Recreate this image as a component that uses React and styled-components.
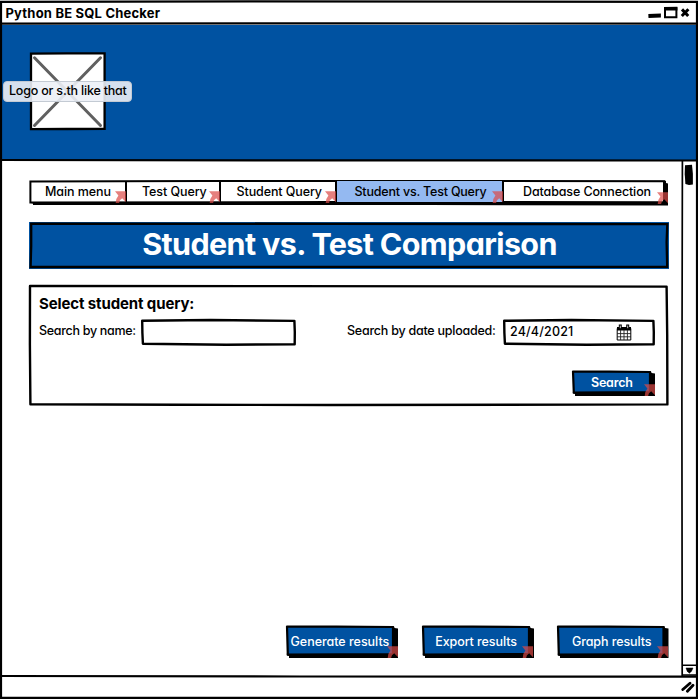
import React from "react";
import styled, { createGlobalStyle } from "styled-components";

const blue = "#0052a1";

const GlobalStyle = createGlobalStyle`
  * { box-sizing: border-box; }
  body {
    margin: 0;
    background: #fff;
    color: #000;
    font-family: Inter, "Liberation Sans", sans-serif;
    font-feature-settings: "cv11";
    font-size: 12.5px;
  }
`;

const Window = styled.div`
  position: relative;
  display: flex;
  flex-direction: column;
  width: 698px;
  height: 699px;
  padding: 3px 2px 2px;
`;

const Text = styled.span`
  white-space: nowrap;
  line-height: 16px;
  font-size: ${(p) => p.$size || 12.5}px;
  font-weight: ${(p) => p.$weight || 450};
  letter-spacing: ${(p) => p.$track || 0}px;
`;

const TitleBar = styled.header`
  display: flex;
  justify-content: space-between;
  height: 22px;
  padding: 2px 4px 0 3.5px;
`;

const WindowControls = styled.svg`
  width: 44px;
  height: 18px;
  margin-top: -1px;
`;

const Banner = styled.div`
  height: 136px;
  padding: 27px 0 0 27px;
  background: ${blue};
`;

const LogoBox = styled.div`
  position: relative;
  width: 77px;
  height: 79px;
`;

const LogoCaption = styled.div`
  position: absolute;
  left: -26px;
  top: 29px;
  width: 129px;
  height: 21px;
  padding: 1px 0 0 5px;
  border: 1px solid #c3cad3;
  border-radius: 4px;
  background: rgba(236, 240, 246, 0.9);
`;

const Body = styled.main`
  display: flex;
  height: 515px;
`;

const Content = styled.div`
  display: flex;
  flex-direction: column;
  flex: 1;
  padding: 18px 12px 17px 26px;
`;

const Scrollbar = styled.div`
  display: flex;
  flex-direction: column;
  justify-content: space-between;
  width: 14px;
`;

const Thumb = styled.svg`
  width: 10px;
  height: 22px;
  margin: 3px 0 0 2px;
`;

const ScrollDown = styled.svg`
  width: 14px;
  height: 12px;
`;

const StatusBar = styled.footer`
  display: flex;
  justify-content: flex-end;
  align-items: center;
  flex: 1;
  padding: 1px 1px 0 0;
`;

const Grip = styled.svg`
  width: 14px;
  height: 12px;
`;

/* Hand-drawn outline stretched behind the part it belongs to */
const Outline = styled.svg`
  position: absolute;
  inset: 0;
  width: 100%;
  height: 100%;
  overflow: visible;
  pointer-events: none;
`;

const Nav = styled.nav`
  position: relative;
  display: flex;
  width: 640px;
  height: 27px;
  padding: 2px 4px 4px 3px;
`;

const NavItem = styled.div`
  position: relative;
  flex: none;
  width: ${(p) => p.$width}px;
  padding: 3px 0 0 ${(p) => p.$indent}px;
  background: ${(p) => (p.$active ? "#94b9f1" : "transparent")};
  border-right: ${(p) => (p.$last ? 0 : 2)}px solid #000;
`;

const LinkMark = styled.svg`
  position: absolute;
  right: ${(p) => p.$right}px;
  bottom: ${(p) => p.$bottom}px;
  width: 11px;
  height: 13px;
  z-index: 1;
`;

const Heading = styled.h1`
  position: relative;
  display: flex;
  justify-content: center;
  width: 640px;
  height: 47px;
  margin: 16px 0 0 1px;
  padding: 6px 0 0 1px;
  color: #fff;
  span { position: relative; line-height: 32px; }
`;

const Panel = styled.section`
  position: relative;
  width: 640px;
  height: 121px;
  margin: 16px 0 0 1px;
  padding: 11px 14px 0 10px;
`;

const Fields = styled.div`
  display: flex;
  height: 26px;
  margin-top: 7px;
`;

const FieldLabel = styled.label`
  width: ${(p) => p.$width}px;
  padding-top: 4px;
  margin-left: ${(p) => p.$gap || 0}px;
`;

const Field = styled.div`
  position: relative;
  display: flex;
  flex: none;
  width: ${(p) => p.$width}px;
  height: 27px;
  padding: 5px 23px 0 7px;
  justify-content: space-between;
`;

const DateValue = styled(Text)`
  position: relative;
  line-height: 15px;
`;

const Calendar = styled.svg`
  position: relative;
  width: 16px;
  height: 17px;
`;

const PanelActions = styled.div`
  display: flex;
  justify-content: flex-end;
  margin-top: 25px;
`;

const Actions = styled.div`
  display: flex;
  gap: 23.7px;
  margin: auto 0 0 258px;
`;

const ButtonBox = styled.div`
  position: relative;
  width: ${(p) => p.$width}px;
  height: ${(p) => p.$height}px;
  padding: ${(p) => p.$top}px 0 0 ${(p) => p.$indent}px;
  color: #fff;
  span { position: relative; }
`;

function Mark({ right = 0, bottom = 0 }) {
  return (
    <LinkMark $right={right} $bottom={bottom} viewBox="0 0 11 13">
      <path d="M0 1.2H11V12.2L7.2 8.3Q4.3 9.8 4.1 13H.7Q.4 9 3.4 5.4Z" fill="#dc4a47" fillOpacity=".7" />
    </LinkMark>
  );
}

function Button({ children, width: w, height: h, top, indent, track, weight = 500 }) {
  return (
    <ButtonBox $width={w} $height={h} $top={top} $indent={indent}>
      <Outline viewBox={`0 0 ${w} ${h}`}>
        <path d={`M3.5 3.5L${w - 4} 1.3L${w - 3.5} 3L${w} 3.6L${w} ${h - 1}L3 ${h - 1}L3 ${h - 3}L.7 ${h - 3.5}Z`} />
        <path d={`M1 1.5L${w * 0.45} 1.7L${w - 5} 2V${h - 5}L1.8 ${h - 4.5}Z`} fill={blue} stroke="#000" strokeWidth="2.2" strokeLinejoin="round" />
      </Outline>
      <Text $track={track} $weight={weight}>{children}</Text>
      <Mark right={0.5} bottom={1} />
    </ButtonBox>
  );
}

function InputFrame({ width }) {
  return (
    <Outline viewBox={`0 0 ${width} 27`}>
      <path
        d={`M1.2 1.8L${width * 0.45} 1L${width - 1.6} 1.9L${width - 1.2} 13L${width - 1.3} 25.2L${width * 0.55} 25.7L1.9 24.7L1.4 14Z`}
        fill="#fff" stroke="#000" strokeWidth="2.4" strokeLinejoin="round"
      />
    </Outline>
  );
}

const tabs = [
  { label: "Main menu", width: 96, indent: 14, track: -0.08 },
  { label: "Test Query", width: 94, indent: 15, track: -0.08 },
  { label: "Student Query", width: 116, indent: 15.5, track: -0.1 },
  { label: "Student vs. Test Query", width: 167, indent: 17.5, track: -0.2, active: true },
  { label: "Database Connection", width: 160, indent: 19, track: -0.12, last: true },
];

export default function App() {
  return (
    <>
      <GlobalStyle />
      <Window>
        <TitleBar>
          <Text $size={13} $weight={700} $track={0.2}>Python BE SQL Checker</Text>
          <WindowControls viewBox="648 4 44 18">
            <path d="M648.3 13.9L660.9 13.6V17.6L648.5 17.9Z" />
            <path d="M665 8.2H676.4V17.2H665Z" fill="#fff" stroke="#000" strokeWidth="2" />
            <path d="M664 7L677.4 6.8V10.5H664Z" />
            <path d="M682 9.4L688.2 16M688.4 9.2L681.8 16" stroke="#000" strokeWidth="3" />
          </WindowControls>
        </TitleBar>
        <Banner>
          <LogoBox>
            <Outline viewBox="0 0 77 79">
              <path d="M2 1.7L38 1.4L75.6 1.4V76.8L38 77L2 77.2Z" fill="#fff" stroke="#000" strokeWidth="2.3" />
              <path d="M5.5 5.8L71.5 73.5M71.5 5.8L5.5 73.5" stroke="#606060" strokeWidth="3" strokeLinecap="round" />
            </Outline>
            <LogoCaption>
              <Text $track={-0.2}>Logo or s.th like that</Text>
            </LogoCaption>
          </LogoBox>
        </Banner>
        <Body>
          <Content>
            <Nav>
              <Outline viewBox="0 0 640 27">
                <path d="M5 3L638 1.7V4L640 4.6V26.5L400 26L200 26.1L5 26V24.5L3 24Z" />
                <path d="M2.4 2.4L180 2L400 1.9L636 2.2V23.2L300 23L2.4 23.6Z" fill="#fff" stroke="#000" strokeWidth="2" />
              </Outline>
              {tabs.map((t) => (
                <NavItem key={t.label} $width={t.width} $indent={t.indent} $active={t.active} $last={t.last}>
                  <Text $track={t.track}>{t.label}</Text>
                  <Mark right={t.last ? -4 : -1} bottom={t.last ? -2 : -1} />
                </NavItem>
              ))}
            </Nav>
            <Heading>
              <Outline viewBox="0 0 640 47">
                <path d="M0 0H640V47H0Z" fill={blue} />
                <path d="M2.2 1.7L300 1.8L638.3 2.2L637.6 20L638.2 44.8L300 44.9L1.6 45L2.2 24Z" fill={blue} stroke="#000" strokeWidth="2.3" />
              </Outline>
              <Text $size={30.5} $weight={700} $track={-0.63}>Student vs. Test Comparison</Text>
            </Heading>
            <Panel>
              <Outline viewBox="0 0 640 121">
                <path d="M1 .9L250 1.1L637.6 1.6L638.2 50L638.4 119.4L300 120L150 119.8L1.4 119.3L.9 60Z" fill="none" stroke="#000" strokeWidth="2.4" strokeLinejoin="round" />
              </Outline>
              <Text $size={15} $weight={700} $track={-0.12}>Select student query:</Text>
              <Fields>
                <FieldLabel $width={102}><Text $track={-0.3}>Search by name:</Text></FieldLabel>
                <Field $width={155}><InputFrame width={155} /></Field>
                <FieldLabel $width={156} $gap={51}><Text $track={-0.24}>Search by date uploaded:</Text></FieldLabel>
                <Field $width={152}>
                  <InputFrame width={152} />
                  <DateValue $track={0.18}>24/4/2021</DateValue>
                  <Calendar viewBox="0 0 16 17">
                    <path d="M1.2 4.5H14.8V16H1.2Z" fill="#fff" stroke="#000" strokeWidth="1" />
                    <path d="M1 3H15V6.5H1ZM2.8 .5H5.8V5H2.8ZM10.2 .5H13.2V5H10.2Z" />
                    <path d="M1 9.6H15M1 12.8H15M4.6 6V16M8 6V16M11.4 6V16" stroke="#222" strokeWidth=".9" fill="none" />
                    <path d="M4.3 1.6V4.2M11.7 1.6V4.2" stroke="#fff" strokeWidth=".8" />
                  </Calendar>
                </Field>
              </Fields>
              <PanelActions>
                <Button width={83} height={27} top={5} indent={19} track={-0.2} weight={600}>Search</Button>
              </PanelActions>
            </Panel>
            <Actions>
              <Button width={112} height={34} top={9} indent={4.5} track={-0.02}>Generate results</Button>
              <Button width={112} height={34} top={9} indent={13.5} track={-0.08}>Export results</Button>
              <Button width={111.5} height={34} top={9} indent={14.5} track={-0.08}>Graph results</Button>
            </Actions>
          </Content>
          <Scrollbar>
            <Thumb viewBox="0 0 10 22">
              <path d="M1 1.2L8 .8Q9.4 10 8.9 20.5L5 20.9L1.4 20Q.2 10 1 1.2Z" />
            </Thumb>
            <ScrollDown viewBox="0 0 14 12">
              <path d="M0 1.2H14M0 11H14" stroke="#000" strokeWidth="1.5" />
              <path d="M4 4H11L9.5 7.2L7.4 9.2L5.2 7.2Z" stroke="#000" strokeWidth=".5" />
            </ScrollDown>
          </Scrollbar>
        </Body>
        <StatusBar>
          <Grip viewBox="0 0 14 12">
            <path d="M1.8 8.5L9 2.2M6.4 10.2L12 4.2" stroke="#000" strokeWidth="2.8" strokeLinecap="round" />
          </Grip>
        </StatusBar>
        <Outline viewBox="0 0 698 699">
          <g stroke="#000" fill="none">
            <path d="M1 1.8L250 1.3L697 1.9V697.8H1Z" strokeWidth="2.2" />
            <path d="M0 23.6L350 23.3L698 23.7M0 160L300 160.4L698 160.5M0 676L300 676.5L698 676.7" strokeWidth="2.2" />
            <path d="M682.4 161L681.9 400L682.2 676" strokeWidth="1.7" />
          </g>
        </Outline>
      </Window>
    </>
  );
}
